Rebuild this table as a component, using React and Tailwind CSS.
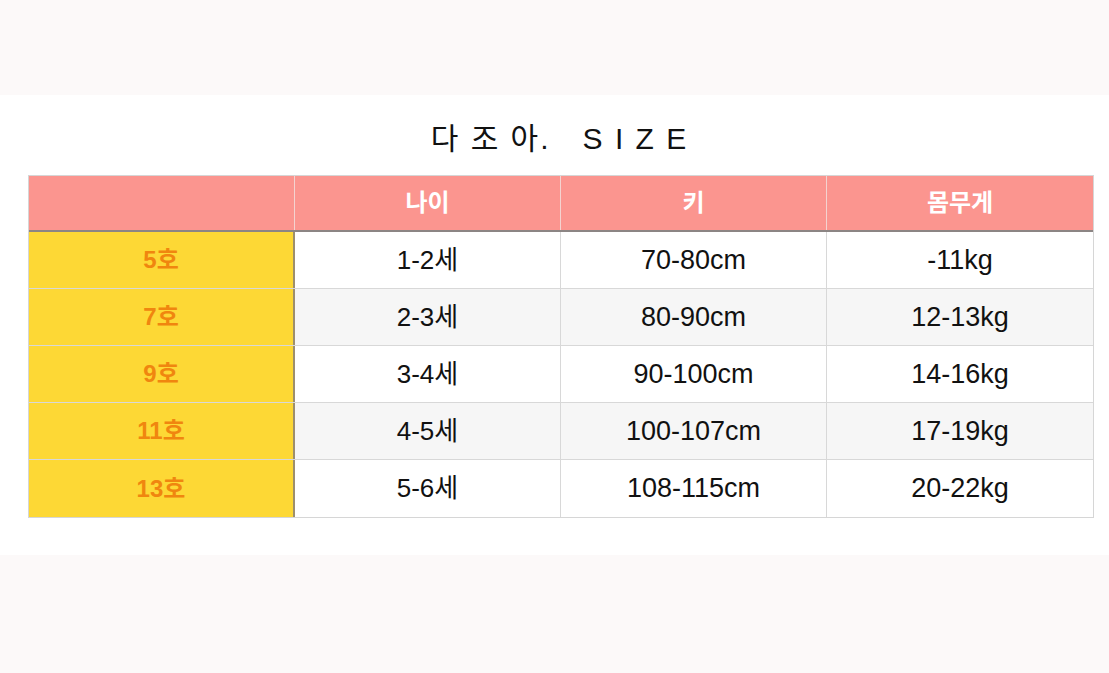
import React from 'react';

const ROWS = [
  { size: '5호', age: '1-2세', height: '70-80cm', weight: '-11kg' },
  { size: '7호', age: '2-3세', height: '80-90cm', weight: '12-13kg' },
  { size: '9호', age: '3-4세', height: '90-100cm', weight: '14-16kg' },
  { size: '11호', age: '4-5세', height: '100-107cm', weight: '17-19kg' },
  { size: '13호', age: '5-6세', height: '108-115cm', weight: '20-22kg' }
];

const FONT = { fontFamily: '"Liberation Sans", "Noto Sans CJK KR", sans-serif' };

export default function App() {
  return (
    <div className="w-[1109px] h-[673px] bg-[#fcf9f9] flex flex-col" style={FONT}>
      <div className="h-[95px]" />
      <div className="h-[460px] bg-white px-[28px] pt-[20px]">
        <h1 className="h-[60px] pb-[14px] pl-[10px] flex items-center justify-center text-[30px] text-[#111] font-normal whitespace-pre">
          <span className="tracking-[2px]">{'다 조 아.'}</span>
          <span className="w-[32px]" />
          <span className="tracking-[2px]">{'S I Z E'}</span>
        </h1>
        <div className="w-[1066px] border border-[#d6d6d6]">
          <div className="grid grid-cols-[266px_266px_266px_1fr] h-[56px] bg-[#fb958f] border-b-2 border-[#8c8584]">
            <div className="border-r border-[#f4d3d0]" />
            {['나이', '키', '몸무게'].map((h, i) => (
              <div
                key={h}
                className={`flex items-center justify-center text-white font-bold text-[24px] ${
                  i < 2 ? 'border-r border-[#f4d3d0]' : ''
                }`}
              >
                {h}
              </div>
            ))}
          </div>
          {ROWS.map((r, idx) => (
            <div
              key={r.size}
              className={`grid grid-cols-[266px_266px_266px_1fr] h-[57px] ${
                idx < ROWS.length - 1 ? 'border-b border-[#d8d8d8]' : ''
              } ${idx % 2 === 1 ? 'bg-[#f6f6f6]' : 'bg-white'}`}
            >
              <div className="flex items-center justify-center bg-[#fdd835] text-[#f0860f] font-bold text-[24px] border-r-2 border-[#9d8f6c]">
                {r.size}
              </div>
              <div className="flex items-center justify-center text-[26px] text-[#111] border-r border-[#d8d8d8]">
                {r.age}
              </div>
              <div className="flex items-center justify-center text-[27px] text-[#111] border-r border-[#d8d8d8]">
                {r.height}
              </div>
              <div className="flex items-center justify-center text-[27px] text-[#111]">
                {r.weight}
              </div>
            </div>
          ))}
        </div>
      </div>
      <div className="flex-1" />
    </div>
  );
}
